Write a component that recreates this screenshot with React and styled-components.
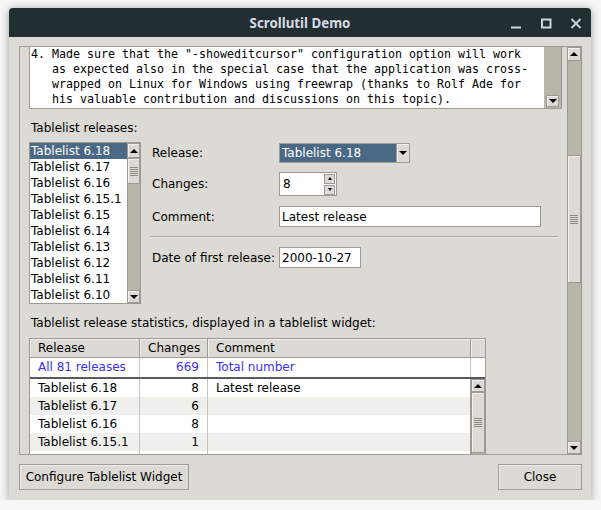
import React from 'react';
import styled, { createGlobalStyle } from 'styled-components';

const Global = createGlobalStyle`
  html, body { margin: 0; padding: 0; background: #f6f6f6; }
  body { font-family: "DejaVu Sans", "Liberation Sans", sans-serif; font-size: 12px; color: #000; }
  * { box-sizing: border-box; }
`;

const BORDER = '#9e9a91';
const BG = '#dcdad5';
const TROUGH = '#bab5ab';
const SEL = '#4a6984';

const Window = styled.div`
  margin: 8px 0 0 9px;
  width: 582px;
  height: 492px;
  background: ${BG};
  border-radius: 4px 4px 0 0;
  box-shadow: 0 1px 9px rgba(0, 0, 0, 0.38);
  display: flex;
  flex-direction: column;
  overflow: hidden;
`;

const TitleBar = styled.div`
  height: 29px;
  flex: none;
  background: #232e33;
  display: grid;
  grid-template-columns: 1fr auto 1fr;
  align-items: center;
`;

const Title = styled.div`
  font-family: "Noto Sans", "Open Sans", sans-serif;
  font-weight: 700;
  font-size: 13.3px;
  color: #d5dce2;
  padding-top: 1px;
`;

const Controls = styled.div`
  justify-self: end;
  display: flex;
  gap: 10px;
  padding-right: 5px;
`;

const Ctl = styled.svg`
  width: 20px;
  height: 20px;
  display: block;
`;

const Body = styled.div`
  flex: 1;
  display: flex;
  flex-direction: column;
  padding: 9px 9px 10px 10px;
`;

const Frame = styled.div`
  height: 409px;
  flex: none;
  display: flex;
  border: 1px solid ${BORDER};
`;

const Content = styled.div`
  flex: 1;
  overflow: hidden;
  display: flex;
  flex-direction: column;
  align-items: flex-start;
  padding: 0 5px 0 9px;
`;

/* ---------- scrollbars ---------- */
const SbRoot = styled.div`
  width: ${p => p.$w}px;
  flex: none;
  align-self: stretch;
  display: flex;
  flex-direction: column;
  background: ${TROUGH};
  border-left: 1px solid ${BORDER};
`;

const SbArrow = styled.div`
  height: ${p => p.$h}px;
  flex: none;
  background: ${BG};
  border: 1px solid ${BORDER};
  border-left: 0;
  box-shadow: inset 1px 1px 0 #f2f0ec;
  display: flex;
  align-items: center;
  justify-content: center;
  &::after {
    content: "";
    border-left: 4px solid transparent;
    border-right: 4px solid transparent;
    ${p => (p.$dir === 'up' ? 'border-bottom: 4px solid #000;' : 'border-top: 4px solid #000;')}
  }
`;

const SbGap = styled.div`
  height: ${p => p.$h}px;
  flex: none;
`;

const SbFill = styled.div`
  flex: 1;
`;

const SbThumb = styled.div`
  height: ${p => p.$h}px;
  flex: none;
  background: ${BG};
  border: 1px solid ${BORDER};
  border-left: 0;
  box-shadow: inset 1px 1px 0 #f2f0ec;
  display: flex;
  align-items: center;
  justify-content: center;
`;

const Grip = styled.div`
  width: 8px;
  height: 9px;
  background: repeating-linear-gradient(to bottom, #8f8b83 0 1px, transparent 1px 2px);
`;

function Scrollbar({ w = 13, up = 14, down = 13, pre = 0, thumb = 30, noDown }) {
  return (
    <SbRoot $w={w}>
      <SbArrow $h={up} $dir="up" />
      <SbGap $h={pre} />
      <SbThumb $h={thumb}><Grip /></SbThumb>
      <SbFill />
      {!noDown && <SbArrow $h={down} $dir="down" />}
    </SbRoot>
  );
}

/* ---------- text widget ---------- */
const TextBox = styled.div`
  width: 533px;
  height: 62px;
  flex: none;
  display: flex;
  border: 1px solid ${BORDER};
  border-top: 0;
`;

const TextArea = styled.div`
  flex: 1;
  background: #fff;
  padding-left: 1px;
  font-family: "DejaVu Sans Mono", "Liberation Mono", monospace;
  font-size: 11.63px;
  line-height: 15px;
  overflow: hidden;
`;

const Line = styled.div`
  white-space: pre;
  padding-left: ${p => (p.$indent ? '21px' : '0')};
`;

const TextScroll = styled.div`
  width: 17px;
  flex: none;
  background: ${TROUGH};
  display: flex;
  flex-direction: column;
  justify-content: flex-end;
  padding: 0 2px 1px 2px;
`;

const SmallArrow = styled(SbArrow)`
  border-left: 1px solid ${BORDER};
`;

/* ---------- labels / rows ---------- */
const SectionLabel = styled.div`
  margin-top: ${p => p.$mt}px;
  line-height: 15px;
  padding-left: 2px;
`;

const MainRow = styled.div`
  margin-top: 6px;
  display: flex;
  align-items: flex-start;
`;

const ListBox = styled.div`
  width: 112px;
  height: 162px;
  display: flex;
  border: 1px solid ${BORDER};
  background: #fff;
`;

const ListItems = styled.div`
  flex: 1;
  overflow: hidden;
`;

const ListItem = styled.div`
  height: 16px;
  line-height: 16px;
  padding-left: 1px;
  white-space: nowrap;
  background: ${p => (p.$sel ? SEL : 'transparent')};
  color: ${p => (p.$sel ? '#fff' : '#000')};
`;

const Form = styled.div`
  margin-left: 9px;
  width: 408px;
  display: flex;
  flex-direction: column;
`;

const FormRow = styled.div`
  margin-top: ${p => p.$mt || 0}px;
  height: ${p => p.$h}px;
  display: flex;
  align-items: center;
`;

const FieldLabel = styled.div`
  width: 129px;
  flex: none;
  padding-left: 2px;
`;

const Combo = styled.div`
  width: 131px;
  height: 20px;
  display: flex;
  border: 1px solid ${BORDER};
  background: #fff;
`;

const ComboField = styled.div`
  flex: 1;
  background: ${SEL};
  color: #fff;
  line-height: 18px;
  padding-left: 2px;
`;

const ComboBtn = styled.div`
  width: 13px;
  flex: none;
  background: ${BG};
  border-left: 1px solid ${BORDER};
  box-shadow: inset 1px 1px 0 #f2f0ec;
  display: flex;
  align-items: center;
  justify-content: center;
  &::after {
    content: "";
    border-left: 4px solid transparent;
    border-right: 4px solid transparent;
    border-top: 4px solid #000;
  }
`;

const Entry = styled.div`
  width: ${p => p.$w}px;
  height: ${p => p.$h || 21}px;
  background: #fff;
  border: 1px solid ${BORDER};
  padding-left: 2px;
  display: flex;
  align-items: center;
  white-space: nowrap;
`;

const Spin = styled.div`
  width: 58px;
  height: 24px;
  background: #fff;
  border: 1px solid ${BORDER};
  display: flex;
  align-items: center;
  padding: 0 1px 0 3px;
`;

const SpinText = styled.div`
  flex: 1;
`;

const SpinBtns = styled.div`
  width: 11px;
  height: 21px;
  display: flex;
  flex-direction: column;
  gap: 1px;
`;

const SpinBtn = styled.div`
  flex: 1;
  background: ${BG};
  border: 1px solid ${BORDER};
  display: flex;
  align-items: center;
  justify-content: center;
  &::after {
    content: "";
    border-left: 2.5px solid transparent;
    border-right: 2.5px solid transparent;
    ${p => (p.$dir === 'up' ? 'border-bottom: 3px solid #000;' : 'border-top: 3px solid #000;')}
  }
`;

const Separator = styled.div`
  margin-top: 9px;
  height: 1px;
  background: #a8a49c;
  box-shadow: 0 1px 0 #ecebe8;
`;

/* ---------- table ---------- */
const Table = styled.div`
  margin-top: 7px;
  width: 457px;
  flex: none;
  border: 1px solid ${BORDER};
  border-bottom: 0;
  background: #fff;
`;

const GridRow = styled.div`
  display: grid;
  grid-template-columns: 110px 68px 263px 14px;
`;

const HeadCell = styled.div`
  height: 19px;
  line-height: 18px;
  background: ${BG};
  border-right: 1px solid ${BORDER};
  border-bottom: 1px solid ${BORDER};
  box-shadow: inset 1px 1px 0 #f2f0ec;
  padding-left: 8px;
  white-space: nowrap;
  &:last-child { border-right: 0; }
`;

const TopCell = styled.div`
  height: 19px;
  line-height: 19px;
  color: #3a31ee;
  border-right: 1px solid #c8c4bc;
  padding: 0 8px;
  text-align: ${p => (p.$right ? 'right' : 'left')};
  white-space: nowrap;
  &:last-child { border-right: 0; }
`;

const TopSep = styled.div`
  height: 2px;
  background: #5a5a5a;
`;

const TableBody = styled.div`
  display: flex;
  height: 76px;
`;

const BodyRows = styled.div`
  width: 441px;
  flex: none;
  border-right: 1px solid ${BORDER};
  overflow: hidden;
`;

const BodyRow = styled.div`
  display: grid;
  grid-template-columns: 110px 68px 262px;
  height: 18px;
  line-height: 18px;
  background: ${p => (p.$stripe ? '#efefec' : '#fff')};
`;

const BodyCell = styled.div`
  border-right: 1px solid #c8c4bc;
  padding: 0 8px;
  text-align: ${p => (p.$right ? 'right' : 'left')};
  white-space: nowrap;
  &:last-child { border-right: 0; }
`;

/* ---------- buttons ---------- */
const ButtonRow = styled.div`
  margin-top: 9px;
  display: flex;
  justify-content: space-between;
`;

const Button = styled.div`
  width: ${p => p.$w}px;
  height: 26px;
  border: 1px solid ${BORDER};
  background: ${BG};
  box-shadow: inset 1px 1px 0 #f0eeea;
  display: flex;
  align-items: center;
  justify-content: center;
  white-space: nowrap;
`;

const releases = ['6.18', '6.17', '6.16', '6.15.1', '6.15', '6.14', '6.13', '6.12', '6.11', '6.10'];

const rows = [
  ['Tablelist 6.18', '8', 'Latest release'],
  ['Tablelist 6.17', '6', ''],
  ['Tablelist 6.16', '8', ''],
  ['Tablelist 6.15.1', '1', ''],
  ['', '', ''],
];

export default function App() {
  return (
    <>
      <Global />
      <Window>
        <TitleBar>
          <span />
          <Title>Scrollutil Demo</Title>
          <Controls>
            <Ctl viewBox="0 0 20 20">
              <line x1="5" y1="14.5" x2="15" y2="14.5" stroke="#cfd6db" strokeWidth="2" />
            </Ctl>
            <Ctl viewBox="0 0 20 20">
              <rect x="6" y="6.5" width="8.5" height="8" fill="none" stroke="#cfd6db" strokeWidth="2" />
            </Ctl>
            <Ctl viewBox="0 0 20 20">
              <path d="M5.5 6 L14.5 15 M14.5 6 L5.5 15" stroke="#cfd6db" strokeWidth="1.8" />
            </Ctl>
          </Controls>
        </TitleBar>
        <Body>
          <Frame>
            <Content>
              <TextBox>
                <TextArea>
                  <Line>4. Made sure that the "-showeditcursor" configuration option will work</Line>
                  <Line $indent>as expected also in the special case that the application was cross-</Line>
                  <Line $indent>wrapped on Linux for Windows using freewrap (thanks to Rolf Ade for</Line>
                  <Line $indent>his valuable contribution and discussions on this topic).</Line>
                </TextArea>
                <TextScroll>
                  <SmallArrow $h={12} $dir="down" />
                </TextScroll>
              </TextBox>

              <SectionLabel $mt={12}>Tablelist releases:</SectionLabel>

              <MainRow>
                <ListBox>
                  <ListItems>
                    {releases.map((r, i) => (
                      <ListItem key={r} $sel={i === 0}>Tablelist {r}</ListItem>
                    ))}
                  </ListItems>
                  <Scrollbar w={13} up={15} down={13} pre={0} thumb={26} />
                </ListBox>

                <Form>
                  <FormRow $h={21}>
                    <FieldLabel>Release:</FieldLabel>
                    <Combo>
                      <ComboField>Tablelist 6.18</ComboField>
                      <ComboBtn />
                    </Combo>
                  </FormRow>
                  <FormRow $h={24} $mt={9}>
                    <FieldLabel>Changes:</FieldLabel>
                    <Spin>
                      <SpinText>8</SpinText>
                      <SpinBtns>
                        <SpinBtn $dir="up" />
                        <SpinBtn $dir="down" />
                      </SpinBtns>
                    </Spin>
                  </FormRow>
                  <FormRow $h={21} $mt={10}>
                    <FieldLabel>Comment:</FieldLabel>
                    <Entry $w={262}>Latest release</Entry>
                  </FormRow>
                  <Separator />
                  <FormRow $h={21} $mt={10}>
                    <FieldLabel>Date of first release:</FieldLabel>
                    <Entry $w={82}>2000-10-27</Entry>
                  </FormRow>
                </Form>
              </MainRow>

              <SectionLabel $mt={12}>Tablelist release statistics, displayed in a tablelist widget:</SectionLabel>

              <Table>
                <GridRow>
                  <HeadCell>Release</HeadCell>
                  <HeadCell>Changes</HeadCell>
                  <HeadCell>Comment</HeadCell>
                  <HeadCell />
                </GridRow>
                <GridRow>
                  <TopCell>All 81 releases</TopCell>
                  <TopCell $right>669</TopCell>
                  <TopCell>Total number</TopCell>
                  <TopCell />
                </GridRow>
                <TopSep />
                <TableBody>
                  <BodyRows>
                    {rows.map((r, i) => (
                      <BodyRow key={i} $stripe={i % 2 === 1}>
                        <BodyCell>{r[0]}</BodyCell>
                        <BodyCell $right>{r[1]}</BodyCell>
                        <BodyCell>{r[2]}</BodyCell>
                      </BodyRow>
                    ))}
                  </BodyRows>
                  <Scrollbar w={14} up={13} pre={0} thumb={61} noDown />
                </TableBody>
              </Table>
            </Content>
            <Scrollbar w={14} up={14} down={13} pre={94} thumb={128} />
          </Frame>
          <ButtonRow>
            <Button $w={170}>Configure Tablelist Widget</Button>
            <Button $w={84}>Close</Button>
          </ButtonRow>
        </Body>
      </Window>
    </>
  );
}
